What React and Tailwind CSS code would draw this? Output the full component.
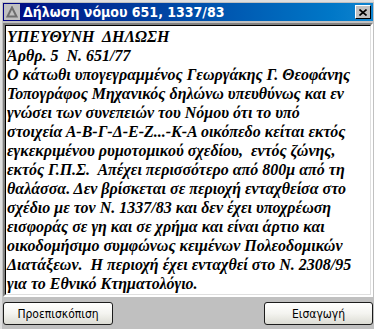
import React from "react";

const lines = [
  "ΥΠΕΥΘΥΝΗ  ΔΗΛΩΣΗ",
  "Άρθρ. 5  Ν. 651/77",
  "Ο κάτωθι υπογεγραμμένος Γεωργάκης Γ. Θεοφάνης",
  "Τοπογράφος Μηχανικός δηλώνω υπευθύνως και εν",
  "γνώσει των συνεπειών του Νόμου ότι το υπό",
  "στοιχεία Α-Β-Γ-Δ-Ε-Ζ...-Κ-Α οικόπεδο κείται εκτός",
  "εγκεκριμένου ρυμοτομικού σχεδίου,  εντός ζώνης,",
  "εκτός Γ.Π.Σ.  Απέχει περισσότερο από 800μ από τη",
  "θαλάσσα. Δεν βρίσκεται σε περιοχή ενταχθείσα στο",
  "σχέδιο με τον Ν. 1337/83 και δεν έχει υποχρέωση",
  "εισφοράς σε γη και σε χρήμα και είναι άρτιο και",
  "οικοδομήσιμο συμφώνως κειμένων Πολεοδομικών",
  "Διατάξεων.  Η περιοχή έχει ενταχθεί στο Ν. 2308/95",
  "για το Εθνικό Κτηματολόγιο.",
];

function XpButton({ children, className = "" }) {
  return (
    <button
      className={
        "h-[23px] rounded-[3px] border border-[#1c1c1c] bg-gradient-to-b from-[#ffffff] via-[#f4f4f0] to-[#dcdcd4] text-[12px] text-black flex items-center justify-center font-['DejaVu_Sans_Condensed','DejaVu_Sans',sans-serif] " +
        className
      }
    >
      {children}
    </button>
  );
}

export default function App() {
  return (
    <div className="w-[374px] h-[329px] bg-[#c0c0c0] border-l-2 border-t-2 border-l-[#dfdfdf] border-t-[#dfdfdf] flex flex-col overflow-hidden">
      <div className="pl-[1px] pt-[1px] pr-[1px] flex flex-col">
        {/* title bar */}
        <div className="h-[18px] flex items-center bg-gradient-to-r from-[#000080] to-[#1084d0]">
          <div className="ml-[1px] w-[16px] h-[16px] bg-[#c0c0c0] flex items-center justify-center">
            <svg width="12" height="12" viewBox="0 0 12 12">
              <path d="M6 1.5 L10.5 10.5 L1.5 10.5 Z" fill="none" stroke="#6f6f6f" strokeWidth="2" />
            </svg>
          </div>
          <span className="ml-[3px] text-white font-bold text-[14px] leading-none whitespace-nowrap font-['DejaVu_Sans_Condensed','DejaVu_Sans',sans-serif]">
            Δήλωση νόμου 651, 1337/83
          </span>
          <div className="ml-auto mr-[2px] w-[16px] h-[14px] bg-[#c0c0c0] border border-t-white border-l-white border-r-black border-b-black flex items-center justify-center">
            <svg width="8" height="7" viewBox="0 0 8 7">
              <path d="M0.5 0.5 L7.5 6.5 M7.5 0.5 L0.5 6.5" stroke="black" strokeWidth="1.6" />
            </svg>
          </div>
        </div>
        {/* text area */}
        <div className="mt-[2px] h-[274px] border-2 border-t-[#808080] border-l-[#808080] border-r-white border-b-white">
          <div className="h-full border border-t-black border-l-black border-r-[#dfdfdf] border-b-[#dfdfdf] bg-white pl-[1px] pt-[1px] overflow-hidden">
            <div className="font-bold italic text-[16px] leading-[19px] text-black whitespace-pre font-['Liberation_Serif','DejaVu_Serif_Condensed','DejaVu_Serif',serif]">
              {lines.map((l, i) => (
                <div key={i}>{l}</div>
              ))}
            </div>
          </div>
        </div>
        {/* buttons */}
        <div className="mt-[5px] flex justify-between">
          <XpButton className="w-[110px]">Προεπισκόπιση</XpButton>
          <XpButton className="w-[109px]">Εισαγωγή</XpButton>
        </div>
      </div>
    </div>
  );
}
